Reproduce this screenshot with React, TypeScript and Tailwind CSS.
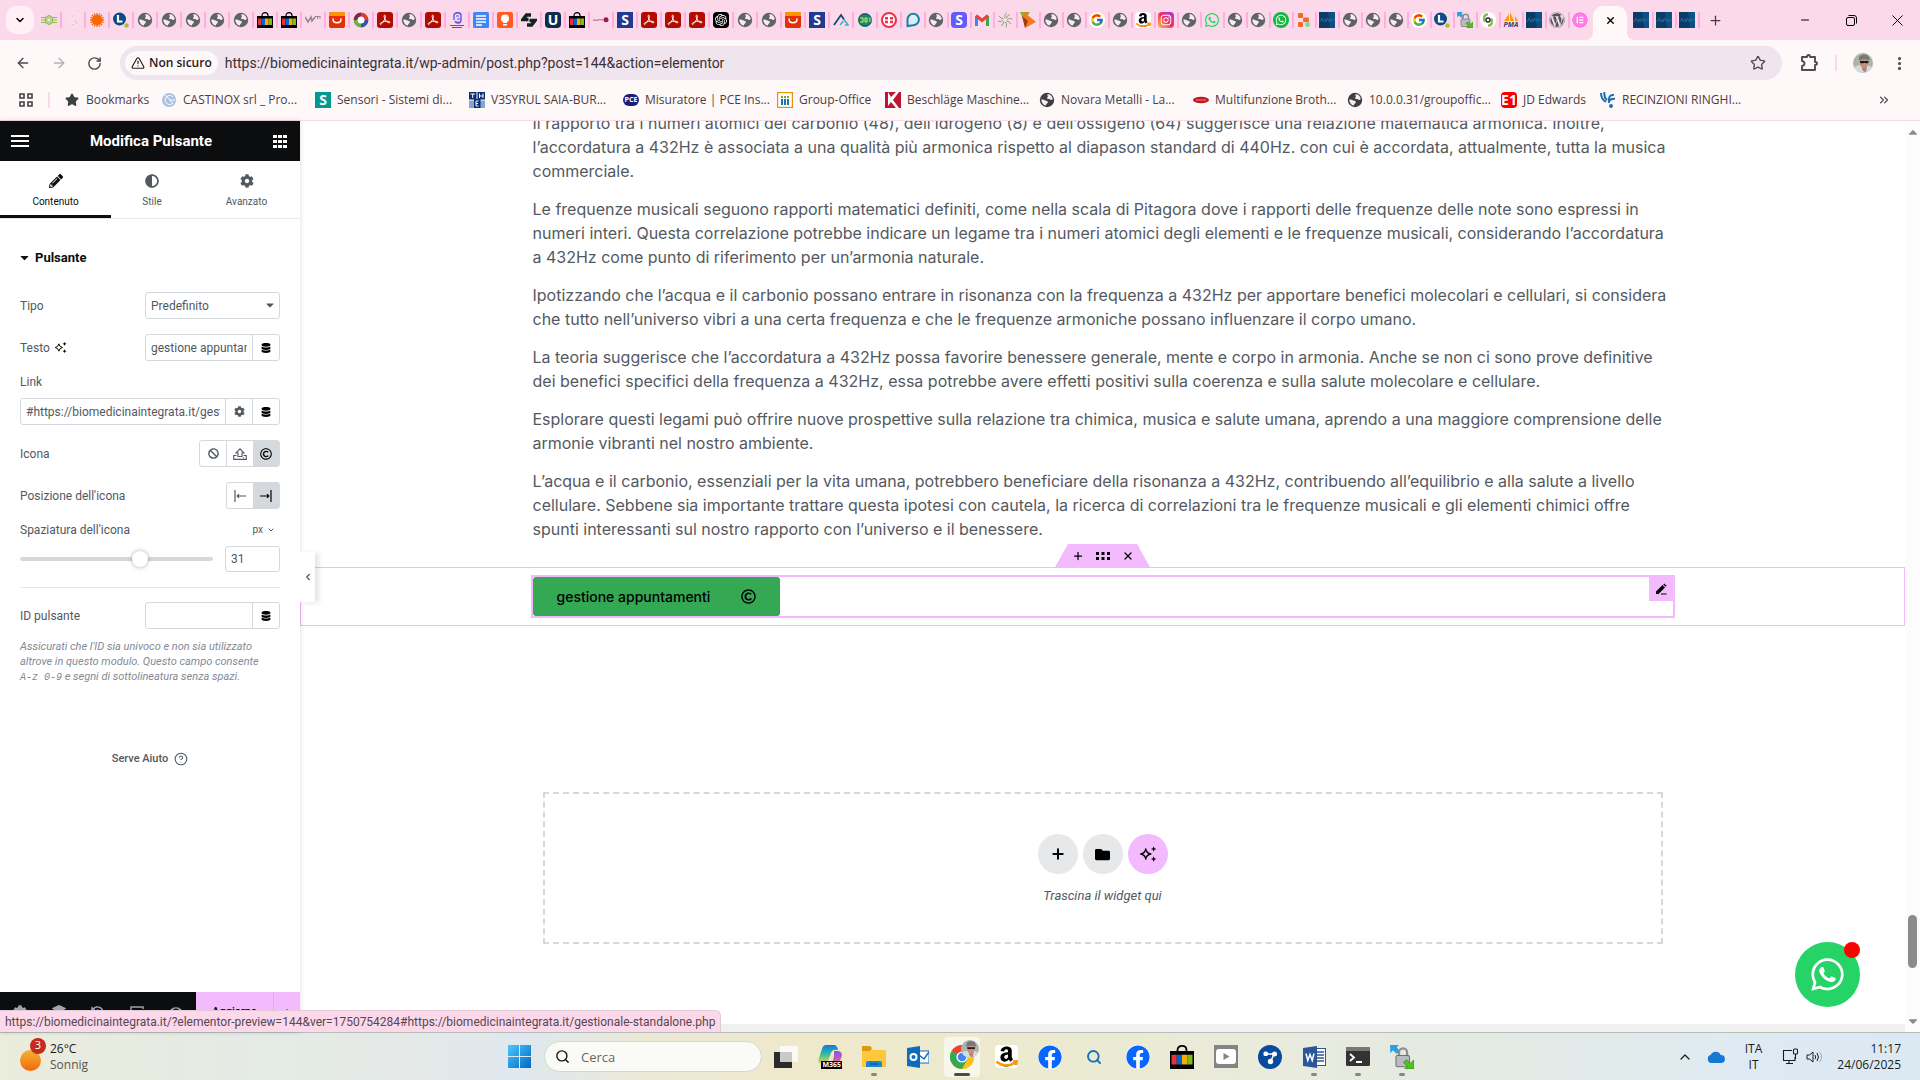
import type { ReactNode } from 'react';
import { FcGoogle } from 'react-icons/fc';
import {
  FaAdjust,
  FaAmazon,
  FaBan,
  FaCaretDown,
  FaCaretUp,
  FaCog,
  FaDatabase,
  FaEye,
  FaFacebook,
  FaFolder,
  FaHistory,
  FaInstagram,
  FaLayerGroup,
  FaPencilAlt,
  FaRegCopyright,
  FaWhatsapp,
  FaWordpress,
} from 'react-icons/fa';
import { SiElementor, SiOpenai } from 'react-icons/si';
import {
  ArrowLeft,
  ArrowRight,
  ChevronDown,
  ChevronLeft,
  ChevronUp,
  ChevronsRight,
  CircleHelp,
  EllipsisVertical,
  Minus,
  Plus,
  RotateCw,
  Search,
  Star,
  TriangleAlert,
  X,
} from 'lucide-react';

/* ---------- small pictures ---------- */

function Globe({ fill = '#5f6368', size = 16 }: { fill?: string; size?: number }) {
  return (
    <svg width={size} height={size} viewBox="0 0 16 16" aria-hidden="true">
      <circle cx="8" cy="8" r="7.2" fill={fill} />
      <path d="M8.4 2.4c2.6-.6 5 1.700 5.300 4.600-.8 1-1.800 1.200-2.500.6-.6-.6-2.300-.1-2.900-.9-.6-.9.800-1.700.600-2.600-.2-.6-.9-.9-.5-1.700zM2.300 7.600c1.300-.2 2.900.4 4.100 1 .9.500 2.500.5 2.500 1.700 0 1-1.300 1.100-1.600 2-.2.600-.4 1.200-1 1.300C4 12.800 2.200 10.600 2.300 7.600z" fill="#fbeaf3" />
    </svg>
  );
}

function Pdf() {
  return (
    <svg width="16" height="16" viewBox="0 0 16 16">
      <rect width="16" height="16" rx="3" fill="#b30b00" />
      <path d="M7.600 3.200c1.600 0 .6 3.600-1.200 6.400-1.500 2.400-3.400 3.400-3.400 2.300 0-1.200 4-2.700 7-2.700 2.400 0 3.200.6 2.900 1.300-.4 1-3-.2-4.400-2.400-1.200-1.900-1.900-4.900-.9-4.900z" fill="none" stroke="#fff" strokeWidth="1" />
    </svg>
  );
}

function ShopBag({ size = 16 }: { size?: number }) {
  return (
    <svg width={size} height={size} viewBox="0 0 16 16">
      <path d="M5 5V3.500C5 1.600 6.300.6 8 .6s3 1 3 2.900V5" fill="none" stroke="#000" strokeWidth="1.200" />
      <path d="M0 4h16v12H0z" fill="#000" />
      <path d="M1 6.500h3.500V13H1z" fill="#e53238" />
      <path d="M4.500 6.500H8V13H4.500z" fill="#0064d2" />
      <path d="M8 6.500h3.500V13H8z" fill="#f5af02" />
      <path d="M11.500 6.500H15V13h-3.500z" fill="#86b817" />
    </svg>
  );
}

function Ali() {
  return (
    <svg width="16" height="16" viewBox="0 0 16 16">
      <rect width="16" height="16" rx="2" fill="#e62e04" />
      <path d="M0 2a2 2 0 0 1 2-2h12a2 2 0 0 1 2 2v2H0z" fill="#ff9300" />
      <path d="M4 7c0 5 8 5 8 0" fill="none" stroke="#fff" strokeWidth="1.500" strokeLinecap="round" />
    </svg>
  );
}

function AmazonIcon({ size = 16 }: { size?: number }) {
  return (
    <span className="relative flex items-center justify-center rounded-sm bg-white text-black">
      <FaAmazon size={size} />
      <svg className="absolute inset-0" width={size} height={size} viewBox="0 0 16 16">
        <path d="M1 11.500c4 3.400 9.500 3.400 13 .8M14.800 14l.4-2.700-2.700.1" fill="none" stroke="#ff9900" strokeWidth="1.600" />
      </svg>
    </span>
  );
}

function LMark() {
  return (
    <svg width="16" height="16" viewBox="0 0 16 16">
      <circle cx="6.500" cy="7" r="6.500" fill="#0b4a85" />
      <path d="M5 3v6.500h4.500" fill="none" stroke="#fff" strokeWidth="2.200" />
      <circle cx="13.500" cy="13.500" r="2.200" fill="#a9bf2c" />
    </svg>
  );
}

function LockSync({ size = 16 }: { size?: number }) {
  return (
    <svg width={size} height={size} viewBox="0 0 16 16">
      <path d="M0 0h6L4.500 1.500 6.500 4 4.500 6 2 3.500.3 5.500z" fill="#2b9fe0" />
      <path d="M6 8V5a2.700 2.700 0 0 1 5.400 0v3" fill="none" stroke="#8b8f94" strokeWidth="1.500" />
      <rect x="4" y="7" width="9" height="7.500" rx="1" fill="#b9bcc0" stroke="#6d7176" strokeWidth=".7" />
      <path d="M16 16H9.800l1.800-1.800L9 11.600l1.800-1.800 2.700 2.500L15.800 10z" fill="#4fc41c" stroke="#2f8a0c" strokeWidth=".5" />
    </svg>
  );
}

function Wave() {
  return (
    <svg width="16" height="16" viewBox="0 0 16 16">
      <rect width="16" height="16" fill="#0a3c66" />
      <path d="M9 0h7v16h-5z" fill="#0d5184" />
      <path d="M0 9h2l1-3 1.500 4L6 7l1 3 1.500-4L10 9.500l1.500-3 1 3 1.500-2 2 .5" fill="none" stroke="#2f73a5" strokeWidth=".7" />
    </svg>
  );
}

function Letter({ children, className }: { children: ReactNode; className: string }) {
  return (
    <span className={`flex size-4 items-center justify-center text-[14px] leading-none font-bold text-white ${className}`}>
      {children}
    </span>
  );
}

const icons: Record<string, ReactNode> = {
  globe: <Globe />,
  pdf: <Pdf />,
  bag: <ShopBag />,
  ali: <Ali />,
  google: <span className="flex size-4 items-center justify-center rounded-full bg-white"><FcGoogle size={14} /></span>,
  amazon: <AmazonIcon />,
  l: <LMark />,
  lock: <LockSync />,
  wave: <Wave />,
  s: <Letter className="bg-[#213a8f]">S</Letter>,
  sp: <Letter className="rounded-sm bg-[#635bff] text-[12px]">S</Letter>,
  u: <Letter className="rounded-sm bg-[#0d2c4a]">U</Letter>,
  wa: <FaWhatsapp size={16} color="#25d366" />,
  waf: <span className="flex size-4 items-center justify-center rounded-full bg-[#10b93d]"><FaWhatsapp size={12} color="#fff" /></span>,
  wp: <FaWordpress size={16} color="#50575e" />,
  el: <span className="flex size-4 items-center justify-center overflow-hidden rounded-full bg-white"><SiElementor size={16} color="#ff7be5" /></span>,
  gpt: <span className="flex size-4 items-center justify-center rounded-sm bg-black"><SiOpenai size={12} color="#fff" /></span>,
  insta: (
    <span className="flex size-4 items-center justify-center rounded bg-linear-to-tr from-[#fdb833] via-[#f0275d] to-[#a022e0]">
      <FaInstagram size={12} color="#fff" />
    </span>
  ),
  atom: (
    <svg width="16" height="16" viewBox="0 0 16 16" fill="none" stroke="#8bc34a">
      <path d="M0 5.500h4.500M0 10.500h4.500M11.500 5.500H16M11.500 10.500H16M0 8h4M12 8h4" strokeWidth="1.200" />
      <path d="M8 3.500l3.500 2.200v4.600L8 12.500l-3.500-2.200V5.700z" strokeWidth="1.200" />
      <circle cx="8" cy="8" r="2.300" />
    </svg>
  ),
  faint: (
    <svg width="16" height="16" viewBox="0 0 16 16">
      <rect x="4" width="12" height="16" fill="#f9deea" />
      <path d="M8 3v2M10 8l2 4M6 12l3 1" stroke="#eebfd2" />
    </svg>
  ),
  burst: (
    <svg width="16" height="16" viewBox="0 0 16 16">
      <circle cx="8" cy="8" r="5" fill="#f96702" />
      <path d="M8 1v14M1 8h14M3 3l10 10M13 3L3 13M5.300 1.500l5.400 13M10.700 1.500l-5.400 13M1.500 5.300l13 5.400M1.500 10.700l13-5.400" stroke="#f96702" strokeWidth="1.300" />
    </svg>
  ),
  w: (
    <svg width="16" height="16" viewBox="0 0 16 16" fill="none" stroke="#8f8a8e">
      <path d="M0 5l3 5 3-5 1 4 3-4" strokeWidth="1.600" />
      <path d="M10 4.500h5.500M12.500 7V4.500M15 7V4.500" />
    </svg>
  ),
  ring: (
    <svg width="16" height="16" viewBox="0 0 16 16" fill="none" strokeWidth="4">
      <circle cx="8" cy="8" r="7.500" fill="#fff" stroke="none" />
      <path d="M8 2.500A5.500 5.500 0 0 1 13.500 8" stroke="#e23b2e" />
      <path d="M13.500 8A5.500 5.500 0 0 1 8 13.500" stroke="#32579f" />
      <path d="M8 13.500A5.500 5.500 0 0 1 2.500 8" stroke="#6dae45" />
      <path d="M2.500 8A5.500 5.500 0 0 1 8 2.500" stroke="#7c2c4c" />
    </svg>
  ),
  sketch: (
    <svg width="16" height="16" viewBox="0 0 16 16" fill="none" stroke="#4a4df0">
      <path d="M5 8V3c0-3 7-3 7 0v5c0 4-5 4-6 1" strokeWidth="1.300" />
      <path d="M7 4h3M8 7h3M7 10h3M1 13.500h14M3 15.500h10" />
    </svg>
  ),
  docs: (
    <svg width="16" height="16" viewBox="0 0 16 16">
      <rect width="16" height="16" rx="1.500" fill="#4285f4" />
      <path d="M3 4h10M3 7h10M3 10h10M3 13h6" stroke="#fff" strokeWidth="1.400" />
    </svg>
  ),
  bulb: (
    <svg width="16" height="16" viewBox="0 0 16 16">
      <rect width="16" height="16" rx="2" fill="#ff5a1f" />
      <circle cx="8" cy="6.500" r="4" fill="#fff" />
      <path d="M6 8h4v5.500H6z" fill="#fff" />
      <path d="M5.500 11.500h5" stroke="#ff5a1f" />
    </svg>
  ),
  dark: (
    <svg width="16" height="16" viewBox="0 0 16 16" fill="none" stroke="#10231c" strokeWidth="3.500">
      <path d="M10 3H5.500L2 7.500h5.500M6 13h4.500L14 8.500H8.500" />
    </svg>
  ),
  dash: (
    <svg width="16" height="16" viewBox="0 0 16 16">
      <path d="M0 8.500c2-2 3 1 5-.5s3 1 5-.5" fill="none" stroke="#bf7a98" strokeWidth="1.200" />
      <circle cx="13" cy="7.800" r="2.500" fill="#9c1c46" />
    </svg>
  ),
  a: (
    <svg width="16" height="16" viewBox="0 0 16 16" fill="none">
      <path d="M1 13L8 3l3 4.500" stroke="#124b6b" strokeWidth="1.800" />
      <path d="M7 13l3.500-4M11 7.500L15 13H12" stroke="#39b5c8" strokeWidth="1.600" />
    </svg>
  ),
  hz: (
    <svg width="16" height="16" viewBox="0 0 16 16">
      <circle cx="8" cy="8" r="7" fill="#178a6f" />
      <circle cx="8" cy="8" r="6" fill="none" stroke="#234a86" />
      <path d="M3 6h3v4H3M8 6h2v4H8zM12 6h1v4" fill="none" stroke="#d4f05a" />
    </svg>
  ),
  red: (
    <svg width="16" height="16" viewBox="0 0 16 16">
      <circle cx="8" cy="8" r="7" fill="#fff" stroke="#f22f46" strokeWidth="2" />
      <path d="M4 5h3v2.500H4zM9 5h3v2.500H9zM4 8.800h3v2.400H4zM9 8.800h3v2.400H9z" fill="#f22f46" />
    </svg>
  ),
  bubble: (
    <svg width="16" height="16" viewBox="0 0 16 16">
      <path d="M2.500 14V7.500a5.700 5.700 0 1 1 5.700 5.700z" fill="#d9eef6" stroke="#1d7fa8" strokeWidth="2" />
    </svg>
  ),
  gmail: (
    <svg width="16" height="16" viewBox="0 0 16 16" fill="none" strokeWidth="3">
      <path d="M2.500 14V4" stroke="#4285f4" />
      <path d="M13.500 14V4" stroke="#34a853" />
      <path d="M2 3.500l6 5 6-5" stroke="#ea4335" />
    </svg>
  ),
  spiral: (
    <svg width="16" height="16" viewBox="0 0 16 16" fill="none" stroke="#7fa87c" strokeWidth="1">
      <path d="M8 6Q7 3 9.500.8M9.500 6.500q0-3 3.300-4M10 8q2-2.500 5.200-1.200M9.500 9.500q3-.5 4.300 2.500M8 10q2.500 1.500 1.200 5.200M6.500 9.500q.5 3-2.500 4.300M6 8q-1.500 2.500-5.200 1.200M6.500 6.500q-3 .5-4.300-2.500" />
    </svg>
  ),
  kite: (
    <svg width="16" height="16" viewBox="0 0 16 16">
      <path d="M0 0h10L4 9z" fill="#8fb02a" />
      <path d="M4 0l12 10-11 6z" fill="#f47a1f" />
      <path d="M2 4l6 5-3 7z" fill="#a33a0c" />
    </svg>
  ),
  blocks: (
    <svg width="16" height="16" viewBox="0 0 16 16">
      <rect x="2" y="1" width="5" height="5" rx="1" fill="#f26b21" />
      <rect x="7" y="5.500" width="6" height="4.500" rx="1" fill="#f26b21" />
      <rect x="2" y="10" width="5" height="5" rx="1" fill="#f26b21" />
      <circle cx="11.500" cy="12.500" r="2.500" fill="#7cd9a0" />
    </svg>
  ),
  bio: (
    <svg width="16" height="16" viewBox="0 0 16 16">
      <circle cx="8" cy="8" r="8" fill="#fff" />
      <path d="M8 2.500C4 2 3 7 5 9.500M8 13.500c4 .5 5-4.500 3-7" fill="none" stroke="#7dbb42" strokeWidth="2.200" />
      <circle cx="8" cy="8" r="2" fill="none" stroke="#222" strokeWidth="1.300" />
    </svg>
  ),
  pma: (
    <span className="flex size-4 flex-col items-center justify-end">
      <svg width="14" height="9" viewBox="0 0 14 9">
        <path d="M0 9L5 2v7zM6 9V0l4 9zM11 9l0-5 3 5z" fill="#f89c0e" />
      </svg>
      <span className="text-[7px] leading-[7px] font-bold text-[#35406f] italic">PMA</span>
    </span>
  ),
};

const wideTabs =
  'atom faint burst l globe globe globe globe globe bag bag w ali ring pdf globe pdf sketch docs bulb dark u bag dash s pdf pdf pdf gpt globe globe ali s a hz red bubble'.split(' ');
const narrowTabs =
  'globe sp gmail spiral kite globe globe google globe amazon insta globe wa globe globe waf blocks wave globe globe globe google l lock bio pma wave wp el'.split(' ');

function Tab({ name, narrow = false, last = false }: { name: string; narrow?: boolean; last?: boolean }) {
  return (
    <button
      type="button"
      aria-label={`Scheda ${name}`}
      className={`flex h-4 shrink-0 items-center gap-[3px] ${narrow ? 'w-[23px] pl-[2px]' : 'w-6 pl-[3px]'}`}
    >
      <span className="flex size-4 items-center justify-center">{icons[name]}</span>
      <span className={last ? 'w-0.5' : 'h-4 w-0.5 bg-[#ffaee0]'} />
    </button>
  );
}

function TabStrip() {
  return (
    <div className="flex h-10 items-center bg-[#fbd9ea] pl-1.5">
      <button type="button" aria-label="Cerca schede" className="mr-1 flex size-7 shrink-0 items-center justify-center rounded-[10px] bg-[#fff0f6]">
        <ChevronDown size={12} strokeWidth={3} />
      </button>
      {wideTabs.map((n, i) => <Tab key={i} name={n} />)}
      {narrowTabs.map((n, i) => <Tab key={i} name={n} narrow last={i === narrowTabs.length - 1} />)}
      <div className="relative mt-1.5 flex h-[34px] w-[34px] shrink-0 items-center justify-center rounded-t-[10px] bg-[#fff8f8] pb-1.5">
        <span className="absolute right-full bottom-0 size-2 bg-[radial-gradient(circle_at_0_0,transparent_8px,#fff8f8_8px)]" />
        <span className="absolute bottom-0 left-full size-2 bg-[radial-gradient(circle_at_100%_0,transparent_8px,#fff8f8_8px)]" />
        <button type="button" aria-label="Chiudi scheda"><X size={11} strokeWidth={3} /></button>
      </div>
      <div className="ml-1 flex items-center">
        <Tab name="wave" narrow /><Tab name="wave" narrow /><Tab name="wave" narrow />
      </div>
      <button type="button" aria-label="Nuova scheda" className="ml-2 text-[#4c3a46]"><Plus size={15} /></button>
      <div className="ml-auto flex h-full text-black">
        <button type="button" aria-label="Riduci" className="flex w-[46px] items-center justify-center"><Minus size={12} strokeWidth={2} /></button>
        <button type="button" aria-label="Ripristina" className="flex w-[46px] items-center justify-center">
          <svg width="11" height="11" viewBox="0 0 11 11" fill="none" stroke="#000">
            <rect x=".5" y="2.500" width="8" height="8" rx="1.500" />
            <path d="M2.500.5H8A2.500 2.500 0 0 1 10.500 3v5.500" />
          </svg>
        </button>
        <button type="button" aria-label="Chiudi" className="flex w-[46px] items-center justify-center">
          <svg width="11" height="11" viewBox="0 0 11 11" stroke="#000"><path d="M.5.5l10 10M10.500.5l-10 10" /></svg>
        </button>
      </div>
    </div>
  );
}

function Avatar({ className }: { className: string }) {
  return (
    <svg viewBox="0 0 20 20" className={className}>
      <circle cx="10" cy="10" r="10" fill="#a9b5a6" />
      <path d="M1 14q9-5 18 0a10 10 0 0 1-18 0z" fill="#d3dae2" />
      <path d="M9 13h5l-1 6q-3 0-4-3z" fill="#b57f6e" />
      <ellipse cx="11" cy="9.500" rx="4.300" ry="5.800" fill="#c78f7c" />
      <path d="M6 7.500Q5 1.500 11 1.500t5.500 6q-5-3-10.500 0z" fill="#73787c" />
      <path d="M7 8h8.500v1.800q-1.800 1-3.900 0-2.500 1-4.600 0z" fill="#1c1c20" />
    </svg>
  );
}

function Toolbar() {
  return (
    <div className="flex h-[46px] items-center bg-[#fff8f8] pr-3 pl-[15px] text-[#584651]">
      <button type="button" aria-label="Indietro"><ArrowLeft size={16} /></button>
      <button type="button" aria-label="Avanti" className="ml-5 text-[#b9adb4]"><ArrowRight size={16} /></button>
      <button type="button" aria-label="Ricarica" className="ml-5"><RotateCw size={15} strokeWidth={2.300} /></button>
      <div className="ml-[18px] flex h-[34px] flex-1 items-center rounded-full bg-[#f0e5ee] pr-4 pl-[5px]">
        <button type="button" className="flex h-6 shrink-0 items-center gap-1 rounded-full bg-[#fff8f8] px-1.5 text-xs font-semibold text-[#1f1a1d]">
          <TriangleAlert size={14} /> <span className="whitespace-nowrap">Non sicuro</span>
        </button>
        <label htmlFor="url" className="sr-only">Indirizzo</label>
        <input
          id="url"
          type="text"
          defaultValue="https://biomedicinaintegrata.it/wp-admin/post.php?post=144&action=elementor"
          className="ml-[7px] w-0 flex-1 bg-transparent font-['Roboto',sans-serif] text-sm text-[#3a2f36] outline-none"
        />
        <button type="button" aria-label="Aggiungi ai preferiti"><Star size={16} /></button>
      </div>
      <button type="button" aria-label="Estensioni" className="ml-[18px]">
        <svg width="18" height="18" viewBox="0 0 18 18" fill="none" stroke="#584651" strokeWidth="1.900">
          <path d="M2 3h5q0-2 1.500-2T10 3h5v5q2 0 2 1.500T15 11v5H2v-4q2.500-.5 2.500-2.500T2 7z" strokeLinejoin="round" />
        </svg>
      </button>
      <span className="ml-[17px] h-4 w-0.5 bg-[#fbd9ea]" />
      <button type="button" aria-label="Profilo" className="ml-4"><Avatar className="size-5" /></button>
      <button type="button" aria-label="Menu" className="ml-[18px]"><EllipsisVertical size={17} strokeWidth={2.500} /></button>
    </div>
  );
}

const bookmarks: { icon: ReactNode; label: string; width: string }[] = [
  { icon: <Star size={14} fill="#3c4043" color="#3c4043" />, label: 'Bookmarks', width: 'w-[97px]' },
  {
    icon: <svg width="16" height="16" viewBox="0 0 16 16"><circle cx="8" cy="8" r="7" fill="#a9bfe4" /><path d="M12 5a4.500 4.500 0 1 0 0 6M8 8h6M4 3q4 3 8 9" fill="none" stroke="#fff" /></svg>,
    label: 'CASTINOX srl _ Pro...', width: 'w-[154px]',
  },
  { icon: <Letter className="bg-[#009a93]">S</Letter>, label: 'Sensori - Sistemi di...', width: 'w-[154px]' },
  {
    icon: (
      <svg width="16" height="16" viewBox="0 0 16 16">
        <rect width="7.500" height="7.500" fill="#0d2d73" /><rect x="8.500" width="7.500" height="7.500" fill="#0d2d73" /><rect y="8.500" width="16" height="7.500" fill="#86a5d3" /><rect x="5" y="7" width="6.500" height="9" fill="#0d2d73" />
        <path d="M1.500 2h4.500M3.700 2v4M10.500 1.500v4.500M14 1.500v4.500M10.500 4H14M9.500 9H7v5h2.500M7 11.500h2" fill="none" stroke="#fff" />
      </svg>
    ),
    label: 'V3SYRUL SAIA-BUR...', width: 'w-[154px]',
  },
  { icon: <span className="flex h-3 w-4 items-center justify-center rounded-full bg-[#1b1f7c] text-[7px] font-bold text-white">PCE</span>, label: 'Misuratore | PCE Ins...', width: 'w-[154px]' },
  {
    icon: <svg width="16" height="16" viewBox="0 0 16 16"><rect x=".6" y=".6" width="14.800" height="14.800" fill="#fff" stroke="#e8930c" strokeWidth="1.200" /><path d="M5 7v6M8 7v6M11 7v6" stroke="#1878a8" strokeWidth="2" /><path d="M5 4v2M8 4v2M11 4v2" stroke="#79a23b" strokeWidth="2" /></svg>,
    label: 'Group-Office', width: 'w-[108px]',
  },
  {
    icon: <svg width="16" height="16" viewBox="0 0 16 16"><rect width="16" height="16" fill="#bd1533" /><path d="M3 2v12l3-4 5 6h3L8 8l6-8h-3L6 5 3 0z" fill="#fff" /></svg>,
    label: 'Beschläge Maschine...', width: 'w-[154px]',
  },
  { icon: <Globe fill="#3c4043" />, label: 'Novara Metalli - La...', width: 'w-[154px]' },
  {
    icon: <svg width="16" height="16" viewBox="0 0 16 16"><ellipse cx="8" cy="8" rx="8" ry="3.300" fill="#c5161d" /><path d="M3 8h10" stroke="#e78b8e" /></svg>,
    label: 'Multifunzione Broth...', width: 'w-[154px]',
  },
  { icon: <Globe fill="#3c4043" />, label: '10.0.0.31/groupoffic...', width: 'w-[154px]' },
  { icon: <Letter className="rounded-sm bg-[#f40000] text-[12px]">E1</Letter>, label: 'JD Edwards', width: 'w-[99px]' },
  {
    icon: <svg width="16" height="16" viewBox="0 0 16 16" fill="none" stroke="#1b6fb0" strokeWidth="2"><path d="M1 1q0 6 5 9M4.500 0q-1 5 2.500 8M14 3q-6-1-5 8M15 7q-4-1-5 2" /><circle cx="11" cy="14" r="1" /></svg>,
    label: 'RECINZIONI RINGHI...', width: 'w-[150px]',
  },
];

function BookmarksBar() {
  return (
    <nav className="flex h-[35px] items-center border-b border-[#f6dbe4] bg-[#fff8f8] pb-1.5 pl-[19px] text-xs text-[#4a3d45]">
      <svg width="14" height="14" viewBox="0 0 14 14" fill="none" stroke="#4a3d45" strokeWidth="1.600">
        <path d="M1 1h4v4H1zM9 1h4v4H9zM1 9h4v4H1zM9 9h4v4H9z" />
      </svg>
      <span className="mr-[14px] ml-[15px] h-4 w-0.5 bg-[#fbd9ea]" />
      {bookmarks.map((b) => (
        <a key={b.label} href="#" className={`flex shrink-0 items-center gap-1.5 whitespace-nowrap ${b.width}`}>
          <span className="flex size-4 shrink-0 items-center justify-center">{b.icon}</span>
          {b.label}
        </a>
      ))}
      <button type="button" aria-label="Altri preferiti" className="mr-[29px] ml-auto"><ChevronsRight size={14} /></button>
    </nav>
  );
}

/* ---------- editor panel ---------- */

function Sparkles({ size }: { size: number }) {
  return (
    <svg width={size} height={size} viewBox="0 0 16 16" aria-hidden="true">
      <path d="M6 3.500q.6 4 4.500 4.500-3.900.6-4.500 4.500Q5.400 8.600 1.500 8 5.400 7.500 6 3.500z" fill="none" stroke="currentColor" strokeWidth="1.200" strokeLinejoin="round" />
      <path d="M13 1l.7 1.800 1.800.7-1.800.7L13 6l-.7-1.800-1.800-.7 1.800-.7zM13 10l.7 1.800 1.800.7-1.800.7L13 15l-.7-1.800-1.800-.7 1.800-.7z" fill="currentColor" />
    </svg>
  );
}

function Row({ label, htmlFor, children }: { label: ReactNode; htmlFor?: string; children: ReactNode }) {
  return (
    <div className="flex h-[27px] items-center justify-between">
      <label htmlFor={htmlFor} className="flex items-center gap-1">{label}</label>
      {children}
    </div>
  );
}

function DynamicButton() {
  return (
    <button type="button" aria-label="Tag dinamici" className="flex w-[27px] shrink-0 items-center justify-center border-l border-[#d5d8dc] text-black">
      <FaDatabase size={10} />
    </button>
  );
}

function PanelTab({ icon, label, active, className }: { icon: ReactNode; label: string; active?: boolean; className: string }) {
  return (
    <button
      type="button"
      className={`flex flex-col items-center gap-2 pt-[13px] text-[10px] leading-3 ${className} ${active ? 'border-b-3 border-[#0c0d0e] text-[#0c0d0e]' : 'text-[#515962]'}`}
    >
      {icon}
      {label}
    </button>
  );
}

function Panel() {
  return (
    <aside className="relative z-10 flex w-[300px] shrink-0 flex-col bg-white font-['Roboto',sans-serif] text-xs leading-3 text-[#515962] shadow-[0_0_5px_rgba(0,0,0,0.15)]">
      <header className="flex h-10 shrink-0 items-center justify-between bg-[#0c0d0e] pr-[13px] pl-[11px] text-white">
        <button type="button" aria-label="Menu">
          <svg width="18" height="12" viewBox="0 0 18 12" fill="#fff"><path d="M0 0h18v2H0zM0 5h18v2H0zM0 10h18v2H0z" /></svg>
        </button>
        <h1 className="text-[15px] leading-5 font-bold">Modifica Pulsante</h1>
        <button type="button" aria-label="Widget">
          <svg width="14" height="13" viewBox="0 0 14 13" fill="#fff"><path d="M0 0h4v3H0zM5 0h4v3H5zM10 0h4v3h-4zM0 5h4v3H0zM5 5h4v3H5zM10 5h4v3h-4zM0 10h4v3H0zM5 10h4v3H5zM10 10h4v3h-4z" /></svg>
        </button>
      </header>
      <div className="flex h-[58px] shrink-0 border-b border-[#e6e8ea]">
        <PanelTab icon={<FaPencilAlt size={14} />} label="Contenuto" active className="w-[111px]" />
        <PanelTab icon={<FaAdjust size={14} />} label="Stile" className="w-[82px]" />
        <PanelTab icon={<FaCog size={14} />} label="Avanzato" className="flex-1" />
      </div>
      <div className="flex min-h-0 flex-1 flex-col px-5">
        <button type="button" className="flex h-[73px] shrink-0 items-start gap-1 pt-8 text-[13px] leading-[14px] font-bold text-[#0c0d0e]">
          <FaCaretDown size={13} className="-ml-0.5" /> Pulsante
        </button>
        <div className="flex flex-col gap-[15px]">
          <Row label="Tipo" htmlFor="tipo">
            <div className="relative h-[27px] w-[135px]">
              <select id="tipo" className="h-full w-full appearance-none rounded-[3px] border border-[#d5d8dc] bg-white pl-[5px] outline-none">
                <option>Predefinito</option>
              </select>
              <FaCaretDown size={12} className="pointer-events-none absolute top-[7px] right-[4px]" />
            </div>
          </Row>
          <Row label={<>Testo <span className="text-black"><Sparkles size={13} /></span></>} htmlFor="testo">
            <div className="flex h-[27px] w-[135px] rounded-[3px] border border-[#d5d8dc]">
              <input id="testo" type="text" defaultValue="gestione appuntamenti" className="mr-[5px] ml-[5px] w-0 flex-1 outline-none" />
              <DynamicButton />
            </div>
          </Row>
          <div className="flex flex-col gap-2.5">
            <label htmlFor="link">Link</label>
            <div className="flex h-[27px] rounded-[3px] border border-[#d5d8dc]">
              <input id="link" type="text" defaultValue="#https://biomedicinaintegrata.it/gestionale-standalone.php" className="mx-[5px] w-0 flex-1 outline-none" />
              <button type="button" aria-label="Opzioni link" className="flex w-[27px] items-center justify-center border-l border-[#d5d8dc]"><FaCog size={11} /></button>
              <DynamicButton />
            </div>
          </div>
          <Row label="Icona">
            <div className="flex h-[27px] w-[81px] overflow-hidden rounded-[3px] border border-[#d5d8dc]">
              <button type="button" aria-label="Nessuna" className="flex flex-1 items-center justify-center"><FaBan size={11} /></button>
              <button type="button" aria-label="Carica SVG" className="flex flex-1 items-center justify-center border-l border-[#d5d8dc]">
                <svg width="14" height="12" viewBox="0 0 14 12" fill="none" stroke="currentColor" strokeWidth="1.100"><path d="M5 8.500V5H3L7 .8 11 5H9v3.500zM3.500 7.500H.7v3.900h12.600V7.500h-2.800M10 9.700h1" /></svg>
              </button>
              <button type="button" aria-label="Libreria icone" className="flex flex-1 items-center justify-center bg-[#d5d8dc] text-black"><FaRegCopyright size={12} /></button>
            </div>
          </Row>
          <Row label="Posizione dell'icona">
            <div className="flex h-[27px] w-[54px] overflow-hidden rounded-[3px] border border-[#d5d8dc]">
              <button type="button" aria-label="Inizio" className="flex flex-1 items-center justify-center">
                <svg width="12" height="12" viewBox="0 0 12 12" fill="none" stroke="currentColor" strokeWidth="1.200"><path d="M1 0v12M3 6h9M5 4.300L3.200 6 5 7.700" /></svg>
              </button>
              <button type="button" aria-label="Fine" className="flex flex-1 items-center justify-center bg-[#d5d8dc] text-black">
                <svg width="12" height="12" viewBox="0 0 12 12" fill="none" stroke="currentColor" strokeWidth="1.200"><path d="M11 0v12M0 6h9M7 4.300L8.800 6 7 7.700" /></svg>
              </button>
            </div>
          </Row>
          <div className="flex flex-col gap-2.5">
            <div className="flex items-center justify-between pr-[5px]">
              <label htmlFor="spazio">Spaziatura dell'icona</label>
              <button type="button" className="flex items-center gap-1 text-[10px]">px <ChevronDown size={8} strokeWidth={3} /></button>
            </div>
            <div className="flex h-[26px] items-center justify-between gap-3">
              <input
                aria-label="Spaziatura"
                type="range"
                min={0}
                max={49}
                defaultValue={31}
                className="h-1 w-0 flex-1 appearance-none rounded-full bg-[#d5d8dc] [&::-webkit-slider-thumb]:size-4 [&::-webkit-slider-thumb]:appearance-none [&::-webkit-slider-thumb]:rounded-full [&::-webkit-slider-thumb]:bg-white [&::-webkit-slider-thumb]:shadow-[0_0_4px_rgba(0,0,0,0.35)]"
              />
              <input id="spazio" type="text" defaultValue="31" className="h-[26px] w-[55px] rounded-[3px] border border-[#d5d8dc] px-[5px] outline-none" />
            </div>
          </div>
          <hr className="border-[#e6e8ea]" />
          <div className="-mt-px flex flex-col gap-2.5">
            <Row label="ID pulsante" htmlFor="idp">
              <div className="flex h-[27px] w-[135px] rounded-[3px] border border-[#d5d8dc]">
                <input id="idp" type="text" className="mx-[5px] w-0 flex-1 outline-none" />
                <DynamicButton />
              </div>
            </Row>
            <p className="text-[11px] leading-[15px] text-[#818a96] italic">
              Assicurati che l'ID sia univoco e non sia utilizzato altrove in questo modulo. Questo campo consente{' '}
              <code className="font-['Liberation_Mono',monospace] text-[10px] whitespace-nowrap">A-z 0-9</code> e segni di sottolineatura senza spazi.
            </p>
          </div>
        </div>
        <a href="#" className="mt-[67px] flex items-center justify-center gap-1.5 text-[11px] leading-[14px] font-medium">
          Serve Aiuto <CircleHelp size={14} strokeWidth={1.800} />
        </a>
      </div>
      <footer className="flex h-10 shrink-0 text-[#9da5ae]">
        <div className="flex w-[196px] items-center justify-around bg-[#0c0d0e]">
          <FaCog size={14} />
          <FaLayerGroup size={14} />
          <FaHistory size={13} />
          <svg width="14" height="13" viewBox="0 0 14 13" fill="none" stroke="currentColor" strokeWidth="1.500"><path d="M13 3V1H1v9h6M9 5h4v7H9z" /></svg>
          <FaEye size={14} />
        </div>
        <button type="button" className="flex-1 bg-[#f3bafd] text-[11px] font-medium text-black">Aggiorna</button>
        <button type="button" aria-label="Opzioni di salvataggio" className="flex w-[27px] items-center justify-center border-l border-[#eda4fb] bg-[#f3bafd] text-black">
          <svg width="8" height="6" viewBox="0 0 8 6"><path d="M0 6l4-6 4 6z" /></svg>
        </button>
      </footer>
      <button type="button" aria-label="Comprimi pannello" className="absolute top-[431px] left-full flex h-[50px] w-[15px] items-center justify-center bg-white shadow-[4px_1px_5px_rgba(0,0,0,0.1)]">
        <ChevronLeft size={10} strokeWidth={3} />
      </button>
    </aside>
  );
}

/* ---------- canvas ---------- */

const paragraphs = [
  ['Il rapporto tra i numeri atomici del carbonio (48), dell’idrogeno (8) e dell’ossigeno (64) suggerisce una relazione matematica armonica. Inoltre,', 'l’accordatura a 432Hz è associata a una qualità più armonica rispetto al diapason standard di 440Hz. con cui è accordata, attualmente, tutta la musica', 'commerciale.'],
  ['Le frequenze musicali seguono rapporti matematici definiti, come nella scala di Pitagora dove i rapporti delle frequenze delle note sono espressi in', 'numeri interi. Questa correlazione potrebbe indicare un legame tra i numeri atomici degli elementi e le frequenze musicali, considerando l’accordatura', 'a 432Hz come punto di riferimento per un’armonia naturale.'],
  ['Ipotizzando che l’acqua e il carbonio possano entrare in risonanza con la frequenza a 432Hz per apportare benefici molecolari e cellulari, si considera', 'che tutto nell’universo vibri a una certa frequenza e che le frequenze armoniche possano influenzare il corpo umano.'],
  ['La teoria suggerisce che l’accordatura a 432Hz possa favorire benessere generale, mente e corpo in armonia. Anche se non ci sono prove definitive', 'dei benefici specifici della frequenza a 432Hz, essa potrebbe avere effetti positivi sulla coerenza e sulla salute molecolare e cellulare.'],
  ['Esplorare questi legami può offrire nuove prospettive sulla relazione tra chimica, musica e salute umana, aprendo a una maggiore comprensione delle', 'armonie vibranti nel nostro ambiente.'],
  ['L’acqua e il carbonio, essenziali per la vita umana, potrebbero beneficiare della risonanza a 432Hz, contribuendo all’equilibrio e alla salute a livello', 'cellulare. Sebbene sia importante trattare questa ipotesi con cautela, la ricerca di correlazioni tra le frequenze musicali e gli elementi chimici offre', 'spunti interessanti sul nostro rapporto con l’universo e il benessere.'],
];

function Canvas() {
  return (
    <main className="relative flex min-w-0 flex-1 flex-col overflow-hidden bg-white">
      <article className="mx-auto -mt-2.5 flex w-full max-w-[1140px] flex-col gap-[14px] font-['Inter',sans-serif] text-base leading-6 whitespace-nowrap text-[#54595f]">
        {paragraphs.map((lines) => (
          <p key={lines[0]}>
            {lines.map((line) => <span key={line} className="block">{line}</span>)}
          </p>
        ))}
      </article>
      <section className="relative mt-[26px] border border-[#f3bafd] py-[7px]">
        <div className="absolute -top-6 left-1/2 flex h-6 w-24 -translate-x-1/2 items-center justify-center gap-3 bg-[#f3bafd] text-black [clip-path:polygon(14%_0,86%_0,100%_100%,0_100%)]">
          <button type="button" aria-label="Aggiungi contenitore"><Plus size={12} strokeWidth={2.500} /></button>
          <button type="button" aria-label="Modifica contenitore">
            <svg width="14" height="8" viewBox="0 0 14 8" fill="#000"><path d="M0 0h3v3H0zM5.500 0h3v3h-3zM11 0h3v3h-3zM0 5h3v3H0zM5.500 5h3v3h-3zM11 5h3v3h-3z" /></svg>
          </button>
          <button type="button" aria-label="Elimina contenitore"><X size={12} strokeWidth={2.500} /></button>
        </div>
        <div className="relative mx-auto w-full max-w-[1144px] border-2 border-[#f3bafd]">
          <a href="#" className="flex h-[39px] w-fit items-center gap-[31px] rounded-[3px] bg-[#34a853] px-6 font-['Inter',sans-serif] text-[14px] font-medium text-black">
            gestione appuntamenti <FaRegCopyright size={15} />
          </a>
          <button type="button" aria-label="Modifica pulsante" className="absolute top-0 right-0 flex size-6 items-center justify-center bg-[#f3bafd] text-black">
            <svg width="12" height="12" viewBox="0 0 12 12"><path d="M1 8.500L7.500 2l2.500 2.500L3.500 11H1zM8.200 1.300L9.200.4l2.400 2.400-1 1z" /><path d="M6 11h5.500" stroke="#000" /></svg>
          </button>
        </div>
      </section>
      <div className="mx-auto mt-[166px] flex h-[152px] w-full max-w-[1120px] shrink-0 flex-col items-center border-2 border-dashed border-[#d5d8dc] pt-10">
        <div className="flex gap-[5px] text-black">
          <button type="button" aria-label="Aggiungi nuovo contenitore" className="flex size-10 items-center justify-center rounded-full bg-[#e6e8ea]"><Plus size={16} strokeWidth={3} /></button>
          <button type="button" aria-label="Aggiungi template" className="flex size-10 items-center justify-center rounded-full bg-[#e6e8ea]"><FaFolder size={15} /></button>
          <button type="button" aria-label="Crea con IA" className="flex size-10 items-center justify-center rounded-full bg-[#f3bafd]"><Sparkles size={18} /></button>
        </div>
        <p className="mt-[14px] font-['Roboto',sans-serif] text-[13px] leading-4 text-[#515962] italic">Trascina il widget qui</p>
      </div>
      <div className="mt-auto h-2 bg-[#f0f0f0]" />
      <a href="#" aria-label="WhatsApp" className="absolute right-[45px] bottom-[25px] flex size-[65px] items-center justify-center rounded-full bg-[#25d366] text-white">
        <FaWhatsapp size={37} />
        <span className="absolute top-0 right-0 size-4 rounded-full bg-[#ff0000]" />
      </a>
    </main>
  );
}

/* ---------- taskbar ---------- */

function TaskIcon({ label, open, active, children }: { label: string; open?: boolean; active?: boolean; children: ReactNode }) {
  return (
    <button type="button" aria-label={label} className="relative flex h-12 w-11 items-center justify-center">
      {active && <span className="absolute inset-x-1 top-1 bottom-1 rounded bg-white/60" />}
      <span className="relative flex">{children}</span>
      {open && <span className="absolute bottom-[5px] left-1/2 h-[3px] w-1.5 -translate-x-1/2 rounded-full bg-[#868686]" />}
      {active && <span className="absolute bottom-[5px] left-1/2 h-[3px] w-4 -translate-x-1/2 rounded-full bg-[#4a4a4a]" />}
    </button>
  );
}

function Taskbar() {
  return (
    <footer className="flex h-12 shrink-0 items-center border-t border-[#b9bdb9] bg-[linear-gradient(90deg,#eaecdc_0%,#e5ebe4_12%,#e4e9e8_22%,#dfe8ef_27%,#ece8d6_34%,#efe9cb_42%,#ebead0_55%,#e9ebdc_66%,#e2eae6_80%,#dfeaf2_90%,#dbe9f3_100%)] text-xs leading-4 text-[#1b1b1b]">
      <div className="flex flex-1 items-center pl-5">
        <button type="button" className="flex items-center gap-2 text-left text-xs">
          <span className="relative size-[22px]">
            <span className="absolute inset-x-0 top-1 size-[21px] rounded-full bg-linear-to-b from-[#f0b432] to-[#f2650c]" />
            <span className="absolute -top-2 left-2.5 flex size-4 items-center justify-center rounded-full bg-[#c42b1c] text-[11px] text-white">3</span>
          </span>
          <span className="flex flex-col"><span>26°C</span><span className="text-[#555]">Sonnig</span></span>
        </button>
      </div>
      <div className="flex items-center">
        <TaskIcon label="Start">
          <svg width="23" height="23" viewBox="0 0 23 23">
            <defs><linearGradient id="win" x1="0" y1="0" x2="1" y2="1"><stop offset="0" stopColor="#4cc8fb" /><stop offset="1" stopColor="#0067c6" /></linearGradient></defs>
            <path d="M0 0h11v11H0zM12 0h11v11H12zM0 12h11v11H0zM12 12h11v11H12z" fill="url(#win)" />
          </svg>
        </TaskIcon>
        <label className="mr-0.5 ml-[3px] flex h-[31px] w-[218px] items-center gap-[11px] rounded-full border border-[#d5d6ce] bg-[#fafaf6] pl-2.5">
          <Search size={15} strokeWidth={2.300} />
          <input type="search" aria-label="Cerca" placeholder="Cerca" className="w-0 flex-1 bg-transparent text-[13px] outline-none placeholder:text-[#666]" />
        </label>
        <TaskIcon label="Visualizzazione attività">
          <svg width="24" height="22" viewBox="0 0 24 22"><rect y="6" width="18" height="16" fill="#2b2b2b" /><rect x="6" width="18" height="16" fill="#fff" fillOpacity=".75" /></svg>
        </TaskIcon>
        <TaskIcon label="Microsoft 365">
          <svg width="24" height="24" viewBox="0 0 24 24">
            <defs>
              <linearGradient id="cpa" x1="0" y1="0" x2="0" y2="1"><stop offset="0" stopColor="#1577e0" /><stop offset=".5" stopColor="#33bfa0" /><stop offset="1" stopColor="#ffd23c" /></linearGradient>
              <linearGradient id="cpb" x1="0" y1="0" x2="0" y2="1"><stop offset="0" stopColor="#8a53e8" /><stop offset="1" stopColor="#ff6f6a" /></linearGradient>
            </defs>
            <path d="M8 0h8q3 0 4 5h-4q-2 0-3 3l-3 8q-1 3-4 3H3q-4-1-2-6l3-9q1-4 4-4z" fill="url(#cpa)" />
            <path d="M16 6h4q5 1 3.500 6L21 18q-1 4-5 4h-5q3-2 4-7l1-4z" fill="url(#cpb)" />
          </svg>
          <span className="absolute right-0 bottom-0 bg-black px-px text-[7px] leading-[8px] font-bold text-white">M365</span>
        </TaskIcon>
        <TaskIcon label="Esplora file" open>
          <svg width="24" height="22" viewBox="0 0 24 22"><path d="M0 1h8l2 3h14v17H0z" fill="#fdc83b" /><path d="M0 0h8l2 2-2 3H0z" fill="#dc9a10" /><path d="M4 21v-4q0-2 2-2h12q2 0 2 2v4z" fill="#1a86d2" /><path d="M8 18h8" stroke="#0d5c9e" strokeWidth="1.500" /></svg>
        </TaskIcon>
        <TaskIcon label="Outlook">
          <svg width="22" height="22" viewBox="0 0 22 22"><rect x="11" y="5" width="11" height="12" fill="#fff" stroke="#0f6cbd" /><path d="M12 9l5 4 5-7" fill="none" stroke="#0f6cbd" strokeWidth="1.500" /><path d="M0 2l13-2v22L0 20z" fill="#0f6cbd" /><circle cx="6.500" cy="11" r="3" fill="none" stroke="#fff" strokeWidth="2" /></svg>
        </TaskIcon>
        <TaskIcon label="Chrome" active>
          <svg width="24" height="24" viewBox="0 0 24 24">
            <circle cx="12" cy="12" r="12" fill="#fbc116" />
            <path d="M12 12L1.600 6A12 12 0 0 1 22.400 6z" fill="#ea4335" />
            <path d="M1.600 6A12 12 0 0 0 12 24l5.200-9L12 12z" fill="#34a853" />
            <path d="M12 12V6h10.400A12 12 0 0 1 12 24l5.200-9z" fill="#fbc116" />
            <circle cx="12" cy="12" r="5.600" fill="#fff" /><circle cx="12" cy="12" r="4.300" fill="#4285f4" />
          </svg>
          <Avatar className="absolute -top-[5px] -right-[5px] size-[18px]" />
        </TaskIcon>
        <TaskIcon label="Amazon"><AmazonIcon size={23} /></TaskIcon>
        <TaskIcon label="Facebook"><FaFacebook size={24} color="#0866ff" className="rounded-full bg-white" /></TaskIcon>
        <TaskIcon label="Ricerca"><Search size={16} strokeWidth={2.800} color="#1273b8" /></TaskIcon>
        <TaskIcon label="Facebook 2"><FaFacebook size={24} color="#0866ff" className="rounded-full bg-white" /></TaskIcon>
        <TaskIcon label="eBay"><ShopBag size={24} /></TaskIcon>
        <TaskIcon label="Video">
          <svg width="24" height="23" viewBox="0 0 24 23"><rect width="24" height="23" fill="#848484" /><rect x="2" y="4" width="20" height="15" rx="3" fill="#fff" /><path d="M9.500 8l6 3.500-6 3.500z" fill="#848484" /></svg>
        </TaskIcon>
        <TaskIcon label="Assistenza">
          <svg width="24" height="24" viewBox="0 0 24 24"><circle cx="12" cy="12" r="12" fill="#084a9e" /><path d="M8 9h8M16 9l-3 7" stroke="#fff" strokeWidth="1.500" /><rect x="5.500" y="6.500" width="4.500" height="4.500" rx="1.500" fill="#fff" /><circle cx="16.500" cy="9" r="2.500" fill="#fff" /><circle cx="12.500" cy="16.500" r="2.700" fill="#fff" /></svg>
        </TaskIcon>
        <TaskIcon label="Word" open>
          <svg width="23" height="22" viewBox="0 0 23 22"><rect x="11" y="2.500" width="11.500" height="17" fill="#fff" stroke="#2b579a" /><path d="M14 6h7M14 9h7M14 12h7M14 15h7" stroke="#2b579a" strokeWidth="1.500" /><path d="M0 2l14-2v22L0 20z" fill="#2b579a" /><path d="M3 7.500l1.800 7L7 8.500l2.200 6 1.800-7" fill="none" stroke="#fff" strokeWidth="1.500" /></svg>
        </TaskIcon>
        <TaskIcon label="Terminale" open>
          <svg width="24" height="19" viewBox="0 0 24 19"><rect width="24" height="19" rx="1.500" fill="#333" /><path d="M0 1.500Q0 0 1.500 0h21Q24 0 24 1.500V4H0z" fill="#777" /><path d="M4 7l4 3.500L4 14M10 15h6" fill="none" stroke="#fff" strokeWidth="1.800" /></svg>
        </TaskIcon>
        <TaskIcon label="WinSCP" open><LockSync size={24} /></TaskIcon>
      </div>
      <div className="flex flex-1 items-center justify-end pr-[19px]">
        <button type="button" aria-label="Icone nascoste"><ChevronUp size={16} strokeWidth={1.800} /></button>
        <svg className="ml-[14px]" width="18" height="12" viewBox="0 0 18 12"><path d="M4.500 12a4.200 4.200 0 0 1-.7-8.200A5.500 5.500 0 0 1 13.800 4 4 4 0 0 1 14 12z" fill="#1478d4" /></svg>
        <span className="ml-5 flex flex-col items-center"><span>ITA</span><span>IT</span></span>
        <svg className="ml-5" width="17" height="17" viewBox="0 0 17 17" fill="none" stroke="#1b1b1b" strokeWidth="1.100"><path d="M10 2.500H1.500v10H13V9M4 15.500h7M7 12.500v3M13.500 6v5" /><rect x="11.500" y="1" width="4" height="5" rx="1" /></svg>
        <svg className="ml-[7px]" width="17" height="14" viewBox="0 0 17 14" fill="none" stroke="#1b1b1b"><path d="M1 5h2.500L7 2v10L3.500 9H1zM9 5q1.500 2 0 4" /><path d="M11 3q3 4 0 8" /><path d="M13.500 1.500q4 5.500 0 11" stroke="#aaa" /></svg>
        <span className="ml-[14px] flex flex-col items-end"><time>11:17</time><time>24/06/2025</time></span>
      </div>
    </footer>
  );
}

export default function App() {
  return (
    <div className="flex h-screen w-full flex-col overflow-hidden bg-white font-['Open_Sans','Noto_Sans',sans-serif]">
      <header>
        <TabStrip />
        <Toolbar />
        <BookmarksBar />
      </header>
      <div className="relative flex min-h-0 flex-1">
        <Panel />
        <Canvas />
        <div className="flex w-[15px] shrink-0 flex-col items-center bg-[#fcfcfc] py-1 text-[#8b8b8b]">
          <FaCaretUp size={14} className="shrink-0" />
          <div className="flex w-[9px] flex-1 flex-col justify-end pb-[46px]">
            <span className="h-[53px] rounded-full bg-[#8b8b8b]" />
          </div>
          <FaCaretDown size={14} className="shrink-0" />
        </div>
        <div className="absolute bottom-0 left-0 z-20 flex h-[22px] items-center rounded-tr-md border-t border-r border-[#e3c8d5] bg-[#fbd9ea] px-[5px] font-['Roboto',sans-serif] text-xs whitespace-nowrap text-[#584651]">
          https://biomedicinaintegrata.it/?elementor-preview=144&amp;ver=1750754284#https://biomedicinaintegrata.it/gestionale-standalone.php
        </div>
      </div>
      <Taskbar />
    </div>
  );
}
